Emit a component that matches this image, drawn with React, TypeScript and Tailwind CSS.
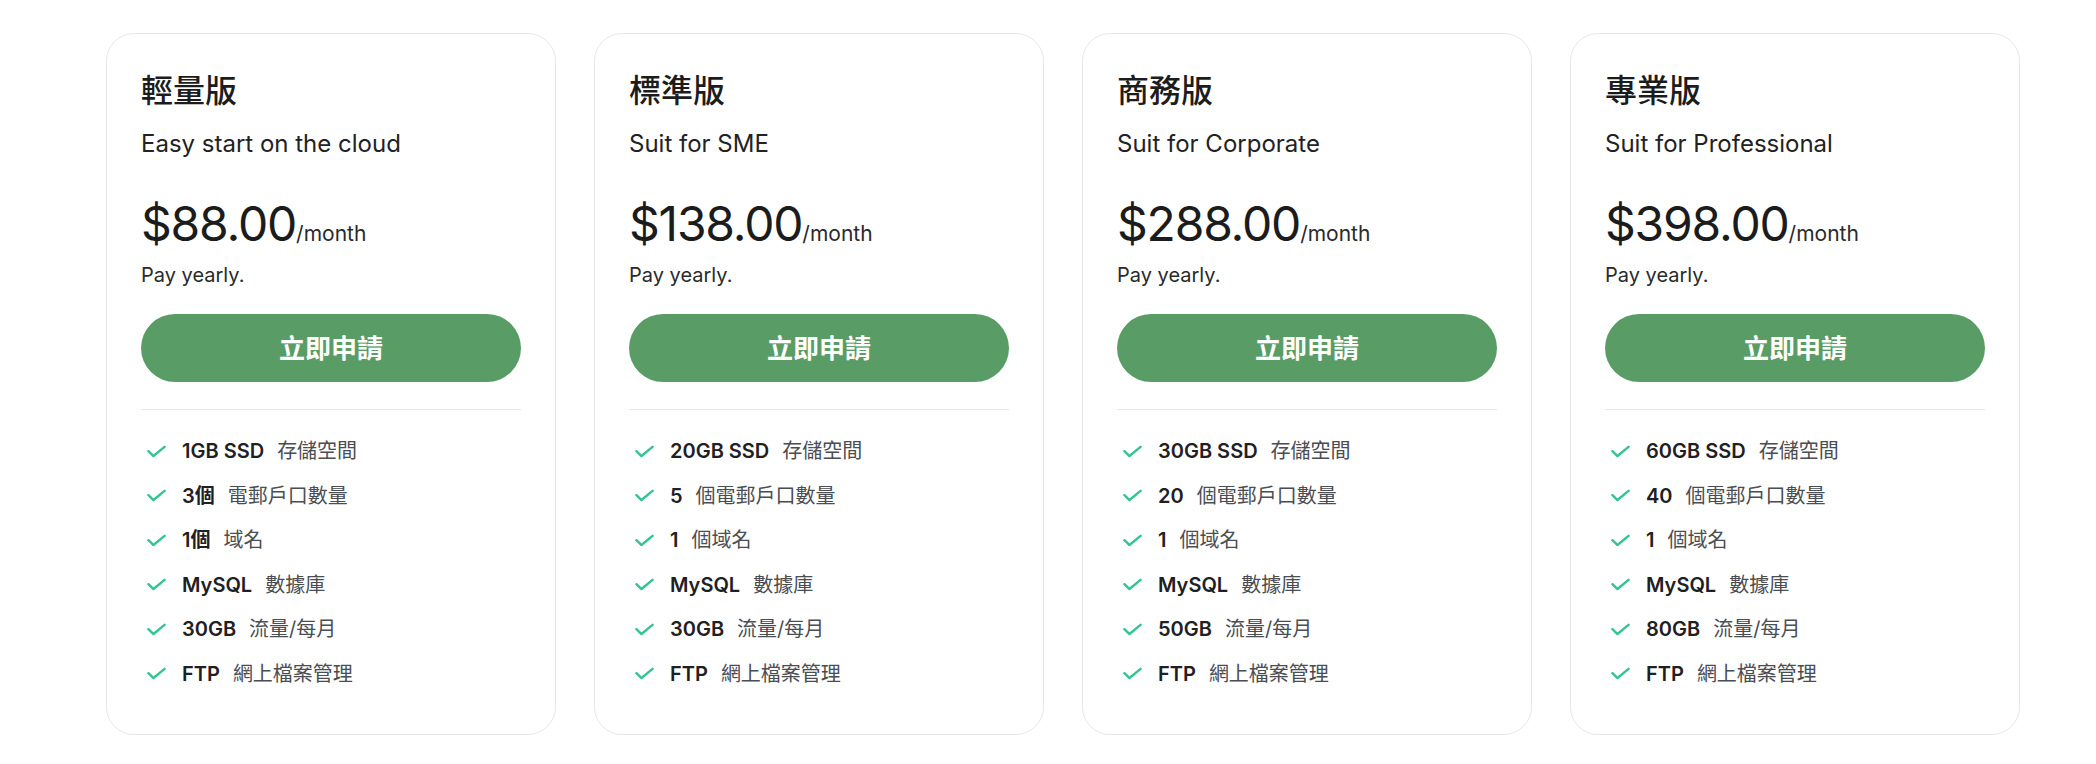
import React from "react";

type Feature = { strong: string; rest: string };

type Plan = {
  name: string;
  tagline: string;
  price: string;
  features: Feature[];
};

const PLANS: Plan[] = [
  {
    name: "輕量版",
    tagline: "Easy start on the cloud",
    price: "$88.00",
    features: [
      { strong: "1GB SSD", rest: "存儲空間" },
      { strong: "3個", rest: "電郵戶口數量" },
      { strong: "1個", rest: "域名" },
      { strong: "MySQL", rest: "數據庫" },
      { strong: "30GB", rest: "流量/每月" },
      { strong: "FTP", rest: "網上檔案管理" },
    ],
  },
  {
    name: "標準版",
    tagline: "Suit for SME",
    price: "$138.00",
    features: [
      { strong: "20GB SSD", rest: "存儲空間" },
      { strong: "5", rest: "個電郵戶口數量" },
      { strong: "1", rest: "個域名" },
      { strong: "MySQL", rest: "數據庫" },
      { strong: "30GB", rest: "流量/每月" },
      { strong: "FTP", rest: "網上檔案管理" },
    ],
  },
  {
    name: "商務版",
    tagline: "Suit for Corporate",
    price: "$288.00",
    features: [
      { strong: "30GB SSD", rest: "存儲空間" },
      { strong: "20", rest: "個電郵戶口數量" },
      { strong: "1", rest: "個域名" },
      { strong: "MySQL", rest: "數據庫" },
      { strong: "50GB", rest: "流量/每月" },
      { strong: "FTP", rest: "網上檔案管理" },
    ],
  },
  {
    name: "專業版",
    tagline: "Suit for Professional",
    price: "$398.00",
    features: [
      { strong: "60GB SSD", rest: "存儲空間" },
      { strong: "40", rest: "個電郵戶口數量" },
      { strong: "1", rest: "個域名" },
      { strong: "MySQL", rest: "數據庫" },
      { strong: "80GB", rest: "流量/每月" },
      { strong: "FTP", rest: "網上檔案管理" },
    ],
  },
];

function CheckMark() {
  return (
    <svg
      viewBox="0 0 20 13"
      className="w-[19px] h-[13px] shrink-0 ml-[6px]"
      fill="none"
      stroke="#36c592"
      strokeWidth="2.6"
      strokeLinecap="round"
      strokeLinejoin="round"
    >
      <path d="M1.5 6.2 6.8 11.3 18.5 1.6" />
    </svg>
  );
}

function PlanCard({ plan }: { plan: Plan }) {
  return (
    <div className="w-[450px] rounded-[28px] border border-[#e6e7ea] bg-white px-[34px] pt-[35px] pb-[45px]">
      <h3 className="text-[32px] leading-[44px] font-medium text-[#1c1c1c]">
        {plan.name}
      </h3>
      <p className="mt-[15px] text-[24px] leading-[32px] text-[#222]">
        {plan.tagline}
      </p>

      {/* price row */}
      <div className="mt-[36px] flex items-baseline h-[56px]">
        <span className="text-[48px] leading-[56px] text-[#1c1c1c] tracking-[-1.2px]">
          {plan.price}
        </span>
        <span className="text-[21px] text-[#2a2a2a]">/month</span>
      </div>
      <p className="mt-[9px] text-[20px] leading-[28px] text-[#2a2a2a]">
        Pay yearly.
      </p>

      <button className="mt-[25px] w-full h-[68px] rounded-full bg-[#5a9c66] text-white text-[26px] font-bold">
        立即申請
      </button>

      <div className="mt-[27px] h-px bg-[#e8e9ec]" />

      <ul className="mt-[26px] flex flex-col gap-[14.6px]">
        {plan.features.map((f) => (
          <li key={f.strong + f.rest} className="flex items-center h-[30px]">
            <CheckMark />
            <span className="ml-[16px] text-[20px] leading-[30px]">
              <span className="font-semibold text-[#1f2023]">{f.strong}</span>
              <span className="ml-[13px] text-[#4a4d52]">{f.rest}</span>
            </span>
          </li>
        ))}
      </ul>
    </div>
  );
}

export default function App() {
  return (
    <div
      className="min-h-screen w-full bg-white pt-[33px] pl-[106px]"
      style={{ fontFamily: "Inter, 'Noto Sans CJK TC', 'Noto Sans', sans-serif" }}
    >
      <div className="flex gap-[38px]">
        {PLANS.map((p) => (
          <PlanCard key={p.name} plan={p} />
        ))}
      </div>
    </div>
  );
}
